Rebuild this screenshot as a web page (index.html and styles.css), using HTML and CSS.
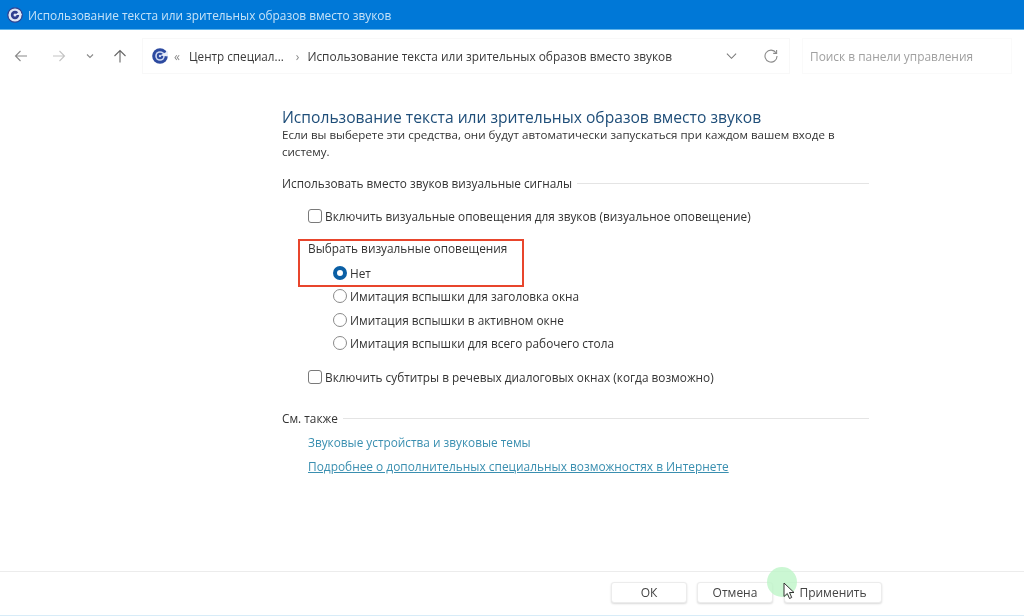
FILE: index.html
```html
<!DOCTYPE html>
<html lang="ru">
<head>
<meta charset="utf-8">
<title>Использование текста</title>
<link rel="stylesheet" href="styles.css">
</head>
<body>
<div class="window">
  <header class="titlebar">
    <svg class="appicon" viewBox="0 0 16 16"><circle cx="8" cy="8" r="7.200" fill="#dfe6f5" stroke="#2f3f8f" stroke-width="1.200"/><circle cx="8" cy="8" r="4.200" fill="#2f3f8f"/><path d="M8 8 13 3.800 15 8Z" fill="#dfe6f5"/><circle cx="8" cy="8" r="1.500" fill="#dfe6f5"/></svg>
    <span class="titletext">Использование текста или зрительных образов вместо звуков</span>
  </header>
  <nav class="toolbar">
    <div class="navbtns">
      <svg class="nav back" viewBox="0 0 14 14"><path d="M13 7H1.500M6.500 2 1.500 7l5 5" fill="none" stroke="#8a8a8a" stroke-width="1.100"/></svg>
      <svg class="nav fwd" viewBox="0 0 14 14"><path d="M1 7h11.500M7.500 2l5 5-5 5" fill="none" stroke="#c4c4c4" stroke-width="1.100"/></svg>
      <svg class="nav drop" viewBox="0 0 8 6"><path d="M1 1.500 4 4.500 7 1.500" fill="none" stroke="#8a8a8a" stroke-width="1.100"/></svg>
      <svg class="nav up" viewBox="0 0 14 14"><path d="M7 13.500V1.500M1.500 7 7 1.500 12.500 7" fill="none" stroke="#666" stroke-width="1.100"/></svg>
    </div>
    <div class="address">
      <svg class="crumbicon" viewBox="0 0 16 16"><circle cx="8" cy="8" r="7.800" fill="#2d4aa0"/><circle cx="8" cy="8" r="4.800" fill="#cfd9f2"/><circle cx="8" cy="8" r="3.200" fill="#2d4aa0"/><path d="M8 7.500 16 3 16 8.500Z" fill="#e8edf9"/><circle cx="8" cy="8" r="1.200" fill="#cfd9f2"/></svg>
      <span class="chev">«</span>
      <span class="crumb first-crumb">Центр специал...</span>
      <span class="chev sep">›</span>
      <span class="crumb">Использование текста или зрительных образов вместо звуков</span>
      <svg class="addrdrop" viewBox="0 0 12 8"><path d="M1 1.500 6 6.500 11 1.500" fill="none" stroke="#777" stroke-width="1.100"/></svg>
      <svg class="refresh" viewBox="0 0 14 14"><path d="M12 3.800A6 6 0 1 0 13 7" fill="none" stroke="#8a8a8a" stroke-width="1.100"/><path d="M12.600 1v3.400H9.200" fill="none" stroke="#8a8a8a" stroke-width="1.100"/></svg>
    </div>
    <div class="search">Поиск в панели управления</div>
  </nav>
  <main class="content">
    <h1 class="heading">Использование текста или зрительных образов вместо звуков</h1>
    <p class="intro">Если вы выберете эти средства, они будут автоматически запускаться при каждом вашем входе в систему.</p>
    <div class="section first"><span>Использовать вместо звуков визуальные сигналы</span><i></i></div>
    <div class="indent">
      <label class="row check1"><span class="checkbox"></span>Включить визуальные оповещения для звуков (визуальное оповещение)</label>
      <div class="groupwrap">
        <div class="grouplabel">Выбрать визуальные оповещения</div>
        <div class="radio on"><span class="dot"></span>Нет</div>
        <div class="highlight"></div>
      </div>
      <div class="radio"><span class="dot"></span>Имитация вспышки для заголовка окна</div>
      <div class="radio"><span class="dot"></span>Имитация вспышки в активном окне</div>
      <div class="radio"><span class="dot"></span>Имитация вспышки для всего рабочего стола</div>
      <label class="row check2"><span class="checkbox"></span>Включить субтитры в речевых диалоговых окнах (когда возможно)</label>
    </div>
    <div class="section also"><span>См. также</span><i></i></div>
    <div class="indent links">
      <a class="link plain">Звуковые устройства и звуковые темы</a>
      <a class="link under">Подробнее о дополнительных специальных возможностях в Интернете</a>
    </div>
  </main>
  <footer class="footer">
    <button class="btn">ОК</button>
    <button class="btn cancel">Отмена</button>
    <button class="btn apply">Применить</button>
    <span class="halo"></span>
    <svg class="cursor" viewBox="0 0 12 18"><path d="M1 1v13.500l3.300-3 2.200 5 2.200-1-2.200-5H11Z" fill="#fff" stroke="#333" stroke-width="1"/></svg>
  </footer>
</div>
</body>
</html>
```
FILE: styles.css
```css
* { box-sizing: border-box; }
html, body { margin: 0; padding: 0; }
body { width: 1024px; height: 616px; overflow: hidden; background: #fff; font-family: "Open Sans", "Noto Sans", sans-serif; color: #333; }
.window { width: 1024px; height: 616px; display: flex; flex-direction: column; background: #fff; position: relative; filter: blur(0.35px); }
.titlebar { height: 30px; flex: none; background: #0078d7; border-bottom: 1px solid #5fb4ea; display: flex; align-items: center; padding-left: 7px; gap: 5px; }
.appicon { width: 16px; height: 16px; }
.titletext { color: #c4e2f8; font-size: 11.850px; white-space: nowrap; }
.toolbar { height: 44px; flex: none; display: flex; align-items: center; margin-top: 4px; }
.navbtns { width: 142px; flex: none; display: flex; align-items: center; padding-left: 14px; }
.nav { height: 14px; width: 14px; flex: none; }
.fwd { margin-left: 24px; }
.drop { width: 8px; height: 6px; margin-left: 20px; }
.up { margin-left: 19px; }
.address { width: 648px; height: 36px; flex: none; border: 1px solid #f8f8f8; display: flex; align-items: center; padding-left: 9px; font-size: 11.900px; color: #3a3a3a; white-space: nowrap; }
.crumbicon { width: 16px; height: 16px; flex: none; }
.chev { color: #888; margin-left: 6px; font-size: 12px; }
.crumb { margin-left: 8px; }
.first-crumb { margin-left: 9px; font-size: 11.700px; }
.sep { margin-left: 12px; }
.addrdrop { width: 11px; height: 8px; margin-left: auto; }
.refresh { width: 14px; height: 14px; margin-left: 27px; margin-right: 11px; }
.search { width: 210px; height: 36px; margin-left: 12px; border: 1px solid #fafafa; display: flex; align-items: center; padding-left: 7px; font-size: 11.900px; color: #a0a0a0; white-space: nowrap; }
.content { flex: 1; padding: 30px 155px 0 282px; border-bottom: 1px solid #ececec; font-size: 11.820px; }
.heading { margin: 0; font-weight: 400; font-size: 15.640px; line-height: 18px; color: #1f4e79; white-space: nowrap; }
.intro { margin: 0; width: 575px; font-size: 11.550px; line-height: 17px; color: #333; }
.section { display: flex; align-items: center; gap: 5px; line-height: 17px; white-space: nowrap; }
.section i { flex: 1; height: 1px; background: #e4e4e4; }
.first { margin-top: 15px; }
.also { margin-top: 24px; }
.indent { padding-left: 26px; }
.row { display: flex; align-items: center; gap: 3px; white-space: nowrap; height: 17px; }
.check1 { margin-top: 15px; }
.check2 { margin-top: 17px; }
.checkbox { width: 14px; height: 14px; flex: none; border: 1px solid #7a7a7a; border-radius: 3px; background: #fff; }
.groupwrap { position: relative; margin-top: 16px; }
.grouplabel { line-height: 17px; white-space: nowrap; }
.radio { display: flex; align-items: center; gap: 3px; height: 17px; margin-top: 6.500px; margin-left: 25px; white-space: nowrap; }
.on { margin-top: 7px; }
.dot { width: 14px; height: 14px; flex: none; border: 1px solid #8a8a8a; border-radius: 50%; background: #fff; }
.on .dot { border: 4px solid #0b5fa5; }
.highlight { position: absolute; left: -10px; top: -1px; width: 226px; height: 48px; border: 2px solid #e8452c; }
.links { display: flex; flex-direction: column; gap: 7px; margin-top: 7px; }
.link { color: #3a8fb0; line-height: 17px; white-space: nowrap; }
.under { text-decoration: underline; font-size: 11.900px; }
.footer { height: 44px; flex: none; display: flex; justify-content: flex-end; align-items: flex-start; gap: 10px; padding: 10px 142px 0 0; position: relative; border-bottom: 1px solid #d8ecf8; }
.btn { width: 76px; height: 21px; padding: 0; border: 1px solid #ececec; border-radius: 3px; background: #fff; box-shadow: 0 1px 2px rgba(0,0,0,.15); font: 12px "Open Sans", "Noto Sans", sans-serif; color: #444; }
.cancel { margin-right: 1px; }
.apply { width: 98px; }
.halo { position: absolute; left: 767px; top: -5px; width: 30px; height: 30px; border-radius: 50%; background: rgba(190,245,200,.8); }
.cursor { position: absolute; left: 783px; top: 10px; width: 12px; height: 18px; }
```
